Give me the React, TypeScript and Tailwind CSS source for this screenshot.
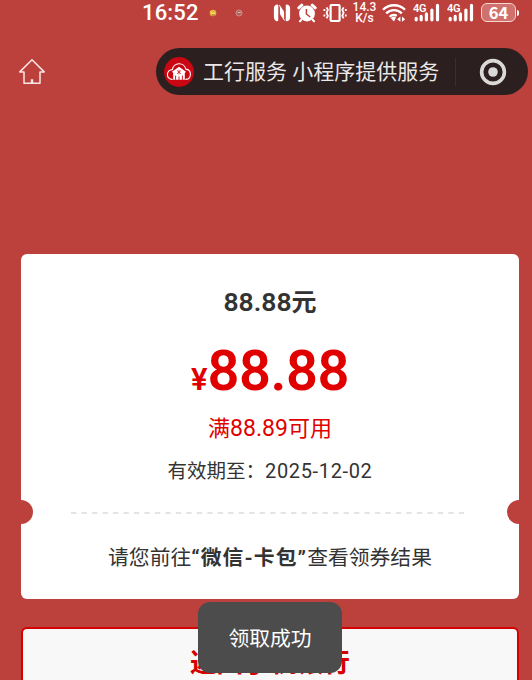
import React from "react";

const HomeIcon: React.FC = () => (
  <svg width="28" height="28" viewBox="0 0 28 28" fill="none" stroke="#f8e6e4" strokeWidth="1.5" strokeLinejoin="round">
    <path d="M14 1.8 L1.8 13.9 H6 V25.3 H22 V13.9 H26.2 Z" />
    <path d="M14 21.2 V25" strokeWidth="2.4" />
  </svg>
);

const CloudHouseLogo: React.FC = () => (
  <svg width="30" height="30" viewBox="0 0 30 30">
    <circle cx="15" cy="15" r="15" fill="#c90612" />
    <path
      d="M8.6 22.4 H8.2 A4.9 4.9 0 0 1 8.4 12.6 A6.8 6.8 0 0 1 21.8 12.1 A5.2 5.2 0 0 1 22 22.4 H21.4"
      fill="none"
      stroke="#fff"
      strokeWidth="1.1"
    />
    <path d="M15 9.8 L22 14.8 L20.8 16 V22.8 H9.2 V16 L8 14.8 Z" fill="#fff" />
    <path d="M13 13.4 L17 16.8 M17 13.4 L13 16.8 M15 12.8 V17.4" stroke="#c90612" strokeWidth="0.7" />
    <path d="M11.6 18.6 V22.8 M15 19.4 V22.8 M18.4 18.6 V22.8" stroke="#c90612" strokeWidth="0.9" />
  </svg>
);

const NfcIcon: React.FC = () => (
  <svg width="18" height="20" viewBox="0 0 18 20" fill="none" stroke="#fff" strokeLinejoin="round" strokeLinecap="round">
    <path d="M4.2 2.6 Q2 3 2 5.4 V14 Q2 16.6 4.2 17.2 V2.6" strokeWidth="2.2" />
    <path d="M13.8 2.6 Q16 3 16 5.6 V14.2 Q16 16.8 13.8 17.2 V2.6" strokeWidth="2.2" />
    <path d="M6.6 2.4 L11.4 9.6 V17.4 L6.6 10.2 Z" fill="#fff" strokeWidth="0.6" />
    <path d="M6.4 4 V17.6 M11.6 2.4 V16" stroke="#bc413d" strokeWidth="1" />
  </svg>
);

const AlarmIcon: React.FC = () => (
  <svg width="20" height="20" viewBox="0 0 20 20" fill="none" stroke="#fff">
    <circle cx="10" cy="10.5" r="7.9" fill="#fff" stroke="none" />
    <path d="M1.8 4.8 L4.8 2.2 M18.2 4.8 L15.2 2.2" strokeWidth="3" strokeLinecap="round" />
    <path d="M4.4 16.6 L3 18.2 M15.6 16.6 L17 18.2" strokeWidth="2.2" strokeLinecap="round" />
    <path d="M9.4 6 V11 L13.2 14" stroke="#bc413d" strokeWidth="1.5" />
  </svg>
);

const VibrateIcon: React.FC = () => (
  <svg width="24" height="20" viewBox="0 0 24 20" fill="none" stroke="#fff" strokeWidth="2.2">
    <rect x="7.6" y="2" width="9" height="16" rx="1" />
    <path
      d="M3.6 4.4 L4.9 6.8 L3.6 9.8 L4.9 12.8 L3.6 15.4 M1.4 6 V8 M1.4 11.4 V13.6 M20.6 4.4 L19.3 6.8 L20.6 9.8 L19.3 12.8 L20.6 15.4 M22.8 6 V8 M22.8 11.4 V13.6"
      strokeWidth="1.8"
    />
  </svg>
);

const WifiIcon: React.FC = () => (
  <svg width="24" height="20" viewBox="0 0 24 20" fill="none" stroke="#fff" strokeWidth="2.3">
    <path d="M1 6.8 A15.6 15.6 0 0 1 23 6.8" />
    <path d="M4.2 10.4 A11 11 0 0 1 19.8 10.4" />
    <path d="M7.6 13.8 A6.4 6.4 0 0 1 14.8 12.8" />
    <path d="M8.8 15.2 A4.6 4.6 0 0 1 14 14.4 L12 18.6 Z" fill="#fff" stroke="none" />
    <path d="M18.4 13.6 L15.2 16.2 L18.4 18.8 Z M20 13.6 L23.2 16.2 L20 18.8 Z" fill="#fff" stroke="none" />
  </svg>
);

const Signal: React.FC = () => (
  <svg width="28" height="20" viewBox="0 0 28 20">
    <text x="0" y="9" fill="#fff" fontSize="11" fontWeight="600" fontFamily="Roboto, sans-serif" textLength="13.5">
      4G
    </text>
    <g stroke="#fff" strokeWidth="3.2" strokeLinecap="round">
      <path d="M3.2 15.4 V16.8 M8.2 13.4 V16.8 M13.4 10.9 V16.8 M18.9 7 V16.8 M24.5 2.4 V16.8" />
    </g>
  </svg>
);

const StatusBar: React.FC = () => (
  <div className="flex h-[25px] items-center pl-[142px] text-white">
    <span className="w-[57px] whitespace-nowrap pt-px text-[22px] font-medium leading-[26px] tracking-[0.15px]">16:52</span>
    <svg className="ml-[10px]" width="36" height="10" viewBox="0 0 36 10">
      <circle cx="4" cy="5" r="3.3" fill="#e8b63c" />
      <path d="M1.8 3.6 L4 6 L6 5" stroke="#fff0a0" strokeWidth="1" fill="none" />
      <path d="M3 7 H6" stroke="#a46a28" />
      <circle cx="30" cy="5" r="3" fill="#a9605a" stroke="#d99a94" strokeWidth="0.8" />
      <path d="M28.5 4.6 H31.8" stroke="#e8bab5" />
    </svg>
    <div className="ml-[28px]"><NfcIcon /></div>
    <div className="ml-[6px]"><AlarmIcon /></div>
    <div className="ml-[6px]"><VibrateIcon /></div>
    <div className="ml-[5px] w-[25px] whitespace-nowrap text-center text-[12px] font-medium leading-[11px]">
      14.3
      <br />
      K/s
    </div>
    <div className="ml-[5px]"><WifiIcon /></div>
    <div className="ml-[7px]"><Signal /></div>
    <div className="ml-[6px]"><Signal /></div>
    <div className="ml-[6px] flex h-[19px] w-[35px] shrink-0 items-center justify-center rounded-[6px] border-[1.5px] border-[#f4d6d4] bg-[#d0716e] font-['Noto_Sans_CJK_SC',sans-serif] text-[16.5px] font-bold leading-[19px]">
      64
    </div>
    <div className="ml-px h-[6px] w-[2px] shrink-0 rounded-r bg-white" />
  </div>
);

const Header: React.FC = () => (
  <div className="mt-[23px] flex h-[47px] items-center pl-[18px]">
    <HomeIcon />
    <div className="ml-[110px] flex h-[47px] w-[372px] shrink-0 items-center rounded-full bg-[#2b1f1f] pl-[8px]">
      <CloudHouseLogo />
      <span className="ml-[9px] w-[237px] whitespace-pre pt-px text-[21px] leading-[28px] text-[#e9e7e7]">工行服务 小程序提供服务</span>
      <div className="ml-[15px] h-[28px] w-px bg-[#3b3030]" />
      <svg className="ml-[23px]" width="28" height="28" viewBox="0 0 28 28">
        <circle cx="14" cy="14" r="11.4" fill="none" stroke="#dad8d8" strokeWidth="3.6" />
        <circle cx="14" cy="14" r="4.8" fill="#dad8d8" />
      </svg>
    </div>
  </div>
);

const Coupon: React.FC = () => (
  <div className="relative mt-[159px] ml-[21px] flex h-[345px] w-[498px] flex-col items-center overflow-hidden rounded-[6px] bg-white text-[#333]">
    <div className="mt-[30px] h-[36px] whitespace-nowrap text-[26.5px] font-semibold leading-[36px]">
      88.88<span className="text-[25px] font-bold">元</span>
    </div>
    <div className="mt-[17px] flex h-[68px] items-baseline whitespace-nowrap font-semibold leading-[68px] text-[#e10000]">
      <span className="text-[31px]">¥</span>
      <span className="text-[56px] tracking-[-0.5px]">88.88</span>
    </div>
    <div className="mt-[8px] h-[32px] whitespace-nowrap text-[22px] leading-[32px] text-[#e10000]">
      满<span className="text-[23px]">88.89</span>可用
    </div>
    <div className="mt-[11px] h-[30px] whitespace-nowrap text-[19.5px] leading-[30px]">
      有效期至：<span className="text-[20px] tracking-[0.65px]">2025-12-02</span>
    </div>
    <svg className="mt-[26px] mr-[3px]" width="395" height="2" viewBox="0 0 395 2">
      <path d="M0 1 H395" stroke="#dcdcdc" strokeWidth="1.4" strokeDasharray="5.4 5.08" />
    </svg>
    <div className="mt-[28px] h-[32px] whitespace-nowrap text-[20.8px] leading-[32px]">
      请您前往<b className="tracking-[1.1px]">“微信-卡包”</b>查看领券结果
    </div>
    <div className="absolute -left-[12px] top-[246px] h-[24px] w-[24px] rounded-full bg-[#bc413d]" />
    <div className="absolute -right-[12px] top-[246px] h-[24px] w-[24px] rounded-full bg-[#bc413d]" />
  </div>
);

const App: React.FC = () => {
  return (
    <div className="relative h-[680px] w-[532px] overflow-hidden bg-[#bc413d] font-[Roboto,'Noto_Sans_CJK_SC',sans-serif]">
      <StatusBar />
      <Header />
      <Coupon />
      <button className="ml-[21px] mt-[28px] flex h-[73px] w-[498px] items-center justify-center rounded-[6px] border-2 border-[#d40000] bg-[#f8f8f8] text-[26.7px] font-bold text-[#d60000]">
        返回手机银行
      </button>
      <div className="absolute left-[198px] top-[602px] flex h-[71px] w-[144px] items-center justify-center rounded-[12px] bg-[#4c4c4c] pt-[5px] text-[20.8px] text-white">
        领取成功
      </div>
    </div>
  );
};

export default App;
